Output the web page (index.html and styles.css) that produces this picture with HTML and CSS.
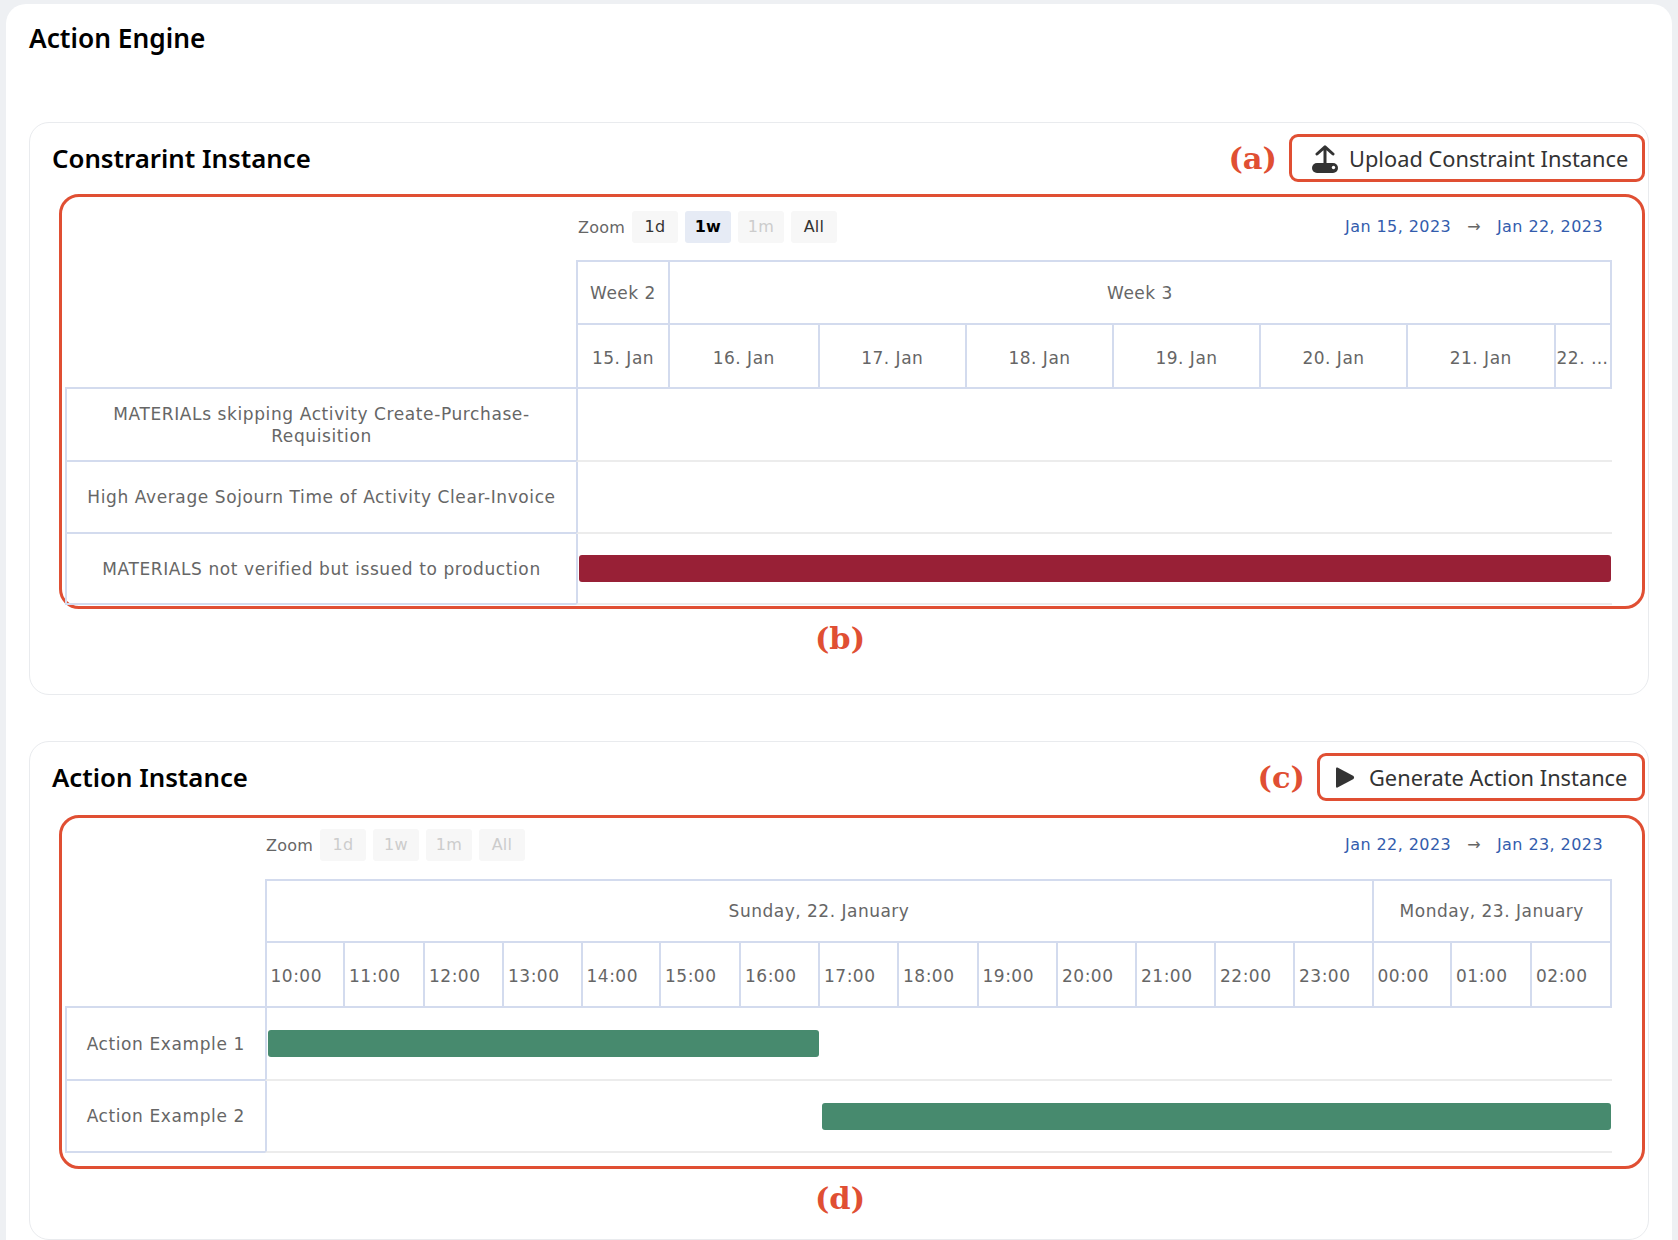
FILE: index.html
```html
<!DOCTYPE html>
<html lang="en">
<head>
  <meta charset="UTF-8" />
  <title>Action Engine</title>
  <link rel="stylesheet" href="styles.css">
</head>
<body>
  <main class="panel">
    <h1>Action Engine</h1>

    <section class="card card-constraint">
      <div class="card-head">
        <h2>Constrarint Instance</h2>
        <span class="tag">(a)</span>
        <button class="action action-upload" type="button">
          <svg class="icon-upload" viewBox="0 0 26 28" aria-hidden="true">
            <path d="M5 9 L13 1.8 L21 9 M13 2.5 V19" fill="none" stroke="#333" stroke-width="3" stroke-linecap="round" stroke-linejoin="round"/>
            <rect x="0" y="18" width="26" height="10" rx="5" fill="#333"/>
            <circle cx="21.5" cy="22.5" r="1.7" fill="#fff"/>
          </svg>
          Upload Constraint Instance
        </button>
      </div>

      <div class="chart chart-constraint">
        <div class="toolbar">
          <div class="zoom">
            <span class="zoom-label">Zoom</span>
            <span class="zoom-btn">1d</span>
            <span class="zoom-btn selected">1w</span>
            <span class="zoom-btn off">1m</span>
            <span class="zoom-btn">All</span>
          </div>
          <div class="range">
            <span>Jan 15, 2023</span><span class="range-arrow">→</span><span>Jan 22, 2023</span>
          </div>
        </div>

        <div class="gantt">
          <div class="corner"></div>
          <div class="head head-top week-2">Week 2</div>
          <div class="head head-top head-end week-3">Week 3</div>
          <div class="head">15. Jan</div>
          <div class="head">16. Jan</div>
          <div class="head">17. Jan</div>
          <div class="head">18. Jan</div>
          <div class="head">19. Jan</div>
          <div class="head">20. Jan</div>
          <div class="head">21. Jan</div>
          <div class="head head-cut head-end">22. …</div>

          <div class="row-label">MATERIALs skipping Activity Create-Purchase-Requisition</div>
          <div class="lane"></div>
          <div class="row-label">High Average Sojourn Time of Activity Clear-Invoice</div>
          <div class="lane"></div>
          <div class="row-label">MATERIALS not verified but issued to production</div>
          <div class="lane"><div class="bar bar-red"></div></div>
        </div>
      </div>
      <div class="tag tag-under">(b)</div>
    </section>

    <section class="card card-action">
      <div class="card-head">
        <h2>Action Instance</h2>
        <span class="tag">(c)</span>
        <button class="action action-generate" type="button">
          <svg class="icon-play" viewBox="0 0 20 22" aria-hidden="true">
            <path d="M2.5 1 L18.5 9.6 Q19.8 11 18.5 12.4 L2.5 21 Q1 21.5 1 20 V2 Q1 0.5 2.5 1 Z" fill="#333"/>
          </svg>
          Generate Action Instance
        </button>
      </div>

      <div class="chart chart-action">
        <div class="toolbar">
          <div class="zoom">
            <span class="zoom-label">Zoom</span>
            <span class="zoom-btn off">1d</span>
            <span class="zoom-btn off">1w</span>
            <span class="zoom-btn off">1m</span>
            <span class="zoom-btn off">All</span>
          </div>
          <div class="range">
            <span>Jan 22, 2023</span><span class="range-arrow">→</span><span>Jan 23, 2023</span>
          </div>
        </div>

        <div class="gantt">
          <div class="corner"></div>
          <div class="head head-top sunday">Sunday, 22. January</div>
          <div class="head head-top head-end monday">Monday, 23. January</div>
          <div class="head head-hour">10:00</div>
          <div class="head head-hour">11:00</div>
          <div class="head head-hour">12:00</div>
          <div class="head head-hour">13:00</div>
          <div class="head head-hour">14:00</div>
          <div class="head head-hour">15:00</div>
          <div class="head head-hour">16:00</div>
          <div class="head head-hour">17:00</div>
          <div class="head head-hour">18:00</div>
          <div class="head head-hour">19:00</div>
          <div class="head head-hour">20:00</div>
          <div class="head head-hour">21:00</div>
          <div class="head head-hour">22:00</div>
          <div class="head head-hour">23:00</div>
          <div class="head head-hour">00:00</div>
          <div class="head head-hour">01:00</div>
          <div class="head head-hour head-end">02:00</div>

          <div class="row-label">Action Example 1</div>
          <div class="lane"><div class="bar bar-green-1"></div></div>
          <div class="row-label">Action Example 2</div>
          <div class="lane"><div class="bar bar-green-2"></div></div>
        </div>
      </div>
      <div class="tag tag-under">(d)</div>
    </section>
  </main>
</body>
</html>
```

FILE: styles.css
```css
html, body {
  height: 1240px;
  overflow: hidden;
}
body {
  margin: 0;
  padding: 4px 6px 0 6px;
  box-sizing: border-box;
  background-color: #eef0f3;
  font-family: "DejaVu Sans", sans-serif;
  color: #666;
}
.panel {
  background-color: #fff;
  border-radius: 20px 20px 0 0;
  height: 1236px;
  padding: 0 23px;
  box-sizing: border-box;
}
h1 {
  margin: 0;
  padding-top: 17px;
  height: 118px;
  box-sizing: border-box;
  font-family: "Noto Sans", sans-serif;
  font-size: 26.3px;
  line-height: 34px;
  font-weight: 600;
  color: #000;
}
h2 {
  margin: 0 auto 0 -7px;
  font-family: "Noto Sans", sans-serif;
  font-size: 25.8px;
  font-weight: 600;
  color: #000;
}

.card {
  border: 1px solid #e9ebee;
  border-radius: 20px;
  box-sizing: border-box;
  padding: 0 3px 0 29px;
}
.card-constraint {
  height: 573px;
  margin-bottom: 46px;
}
.card-action {
  height: 499px;
}
.card-head {
  display: flex;
  align-items: center;
  height: 48px;
  margin-top: 11px;
}

.tag {
  font-family: "DejaVu Serif", serif;
  font-weight: bold;
  font-size: 30.5px;
  color: #e04f33;
  margin-right: 12px;
}
.tag-under {
  margin: 11px 0 0 0;
  padding-right: 24px;
  text-align: center;
}

.action {
  display: flex;
  align-items: center;
  height: 48px;
  box-sizing: border-box;
  border: 3px solid #e04f33;
  border-radius: 9px;
  background-color: #fff;
  font-family: "Noto Sans", sans-serif;
  font-size: 21.8px;
  color: #333;
  padding: 1px 0 0 0;
}
.action-upload {
  width: 356px;
  padding-left: 20px;
  gap: 11px;
}
.action-generate {
  width: 328px;
  padding-left: 15px;
  gap: 14px;
}
.icon-upload { width: 26px; height: 28px; }
.icon-play { width: 20px; height: 23px; }

.chart {
  border: 3px solid #e04f33;
  border-radius: 20px;
  padding: 0 0 0 3px;
  box-sizing: border-box;
}
.chart-constraint {
  margin-top: 12px;
  height: 415px;
  padding-top: 14px;
}
.chart-action {
  margin-top: 14px;
  height: 354px;
  padding-top: 11px;
}
.toolbar {
  display: flex;
  justify-content: space-between;
  align-items: center;
  height: 32px;
  padding-right: 39px;
}
.chart-constraint .toolbar { padding-left: 513px; margin-bottom: 17px; }
.chart-action .toolbar { padding-left: 201px; margin-bottom: 18px; }
.zoom {
  display: flex;
  align-items: center;
  gap: 7px;
  font-size: 16px;
  letter-spacing: 0.2px;
}
.zoom-btn {
  width: 46px;
  height: 32px;
  line-height: 32px;
  text-align: center;
  border-radius: 3px;
  background-color: #f7f7f7;
  color: #333;
}
.zoom-btn.selected {
  background-color: #e6ebf5;
  color: #000;
  font-weight: bold;
}
.zoom-btn.off { color: #ccc; }
.range {
  display: flex;
  align-items: center;
  margin-top: -2px;
  font-size: 16px;
  letter-spacing: 0.42px;
  color: #335cad;
}
.range-arrow {
  color: #666;
  margin: 0 16px;
}

.gantt {
  display: grid;
  font-size: 17px;
  letter-spacing: 0.5px;
  color: #666;
}
.chart-constraint .gantt {
  grid-template-columns: 511px 92px 149.5px 147.5px 147px 147px 147px 147.5px 58.5px;
  grid-template-rows: 65px 64px 73px 72px 71px;
}
.chart-action .gantt {
  grid-template-columns: 199.5px 78.5px 80px 79px 78.5px 78.5px 80px 79px 79px 79.5px 79.5px 79px 79px 79px 78.5px 78.5px 80px 82px;
  grid-template-rows: 64px 65px 73px 72px;
}
.corner {
  grid-column: 1;
  grid-row: 1 / span 2;
  border-bottom: 2px solid #d3dbee;
}
.head {
  display: flex;
  align-items: center;
  justify-content: center;
  padding-top: 3px;
  border-left: 2px solid #d3dbee;
  border-bottom: 2px solid #d3dbee;
  white-space: nowrap;
  min-width: 0;
  overflow: hidden;
}
.head-top {
  padding-top: 0;
  border-top: 2px solid #d3dbee;
}
.head-end { border-right: 2px solid #d3dbee; }
.week-2 { grid-column: 2; grid-row: 1; }
.week-3 { grid-column: 3 / -1; grid-row: 1; }
.sunday { grid-column: 2 / span 14; grid-row: 1; }
.monday { grid-column: 16 / -1; grid-row: 1; }
.head-cut {
  justify-content: flex-start;
  padding-left: 1px;
}
.head-hour {
  justify-content: flex-start;
  padding-left: 4px;
}

.row-label {
  grid-column: 1;
  display: flex;
  align-items: center;
  justify-content: center;
  text-align: center;
  padding: 0 12px;
  line-height: 22px;
  letter-spacing: 0.6px;
  border-left: 2px solid #d3dbee;
  border-bottom: 2px solid #d3dbee;
}
.lane {
  grid-column: 2 / -1;
  display: flex;
  align-items: center;
  border-left: 2px solid #d3dbee;
  border-bottom: 2px solid #ececec;
}
.bar {
  height: 27px;
  border-radius: 3px;
}
.bar-red {
  background-color: #982036;
  width: 1032px;
  margin-left: 1px;
}
.bar-green-1 {
  background-color: #478a6e;
  width: 551px;
  margin-left: 1.5px;
}
.bar-green-2 {
  background-color: #478a6e;
  width: 789.5px;
  margin-left: 555px;
}
```
